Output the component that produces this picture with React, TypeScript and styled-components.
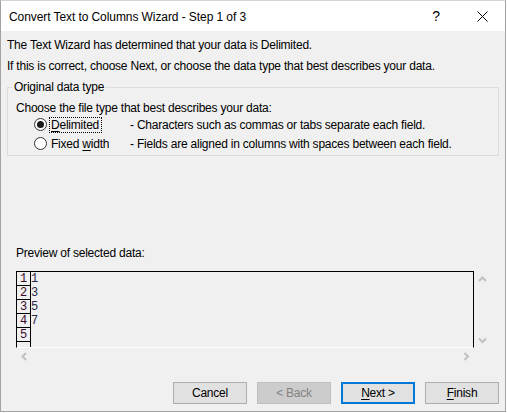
import React from "react";
import styled, { createGlobalStyle } from "styled-components";

const GlobalStyle = createGlobalStyle`
  html, body {
    margin: 0;
    padding: 0;
    background: #ffffff;
  }
  body {
    font-family: "Segoe UI", "Liberation Sans", Arial, sans-serif;
    font-size: 12px;
    letter-spacing: -0.22px;
    color: #000000;
  }
`;

const Frame = styled.div`
  box-sizing: border-box;
  width: 506px;
  height: 412px;
  border: 1px solid #a3a3a3;
  border-top-color: #d4d4d4;
  background: #f0f0f0;
  display: flex;
  flex-direction: column;
`;

const TitleBar = styled.div`
  height: 30px;
  flex: none;
  background: #ffffff;
  display: flex;
  align-items: center;
`;

const Title = styled.div`
  flex: 1;
  padding: 2px 0 0 8px;
  font-size: 12px;
  letter-spacing: -0.08px;
  white-space: nowrap;
`;

const CaptionButton = styled.div`
  width: 46px;
  height: 30px;
  display: flex;
  align-items: center;
  justify-content: center;
  font-size: 14px;
`;

const Body = styled.div`
  flex: 1;
  display: flex;
  flex-direction: column;
  padding: 0 6px 0 6px;
`;

const Line = styled.div<{ $top: number; $indent?: number; $height?: number }>`
  line-height: 16px;
  height: ${(p) => p.$height ?? 16}px;
  margin-top: ${(p) => p.$top}px;
  padding-left: ${(p) => p.$indent ?? 0}px;
  white-space: nowrap;
`;

const GroupBox = styled.fieldset`
  margin: 5px 0 0 0;
  padding: 0 0 2px 0;
  border: 1px solid #dcdcdc;
  min-width: 0;
`;

const Legend = styled.legend`
  margin-left: 4px;
  padding: 0 2px;
  line-height: 16px;
`;

const RadioRow = styled.div`
  height: 19px;
  display: flex;
  align-items: center;
  padding-left: 26px;
  white-space: nowrap;
`;

const RadioDot = styled.span<{ $checked?: boolean }>`
  box-sizing: border-box;
  width: 13px;
  height: 13px;
  border-radius: 50%;
  border: 1px solid #333333;
  background: #ffffff;
  display: flex;
  align-items: center;
  justify-content: center;
  flex: none;

  &::after {
    content: "";
    width: 7px;
    height: 7px;
    border-radius: 50%;
    background: #1a1a1a;
    display: ${(p) => (p.$checked ? "block" : "none")};
  }
`;

const RadioLabel = styled.span`
  width: 80px;
  margin-left: 3px;
  flex: none;
  display: flex;
`;

const FocusText = styled.span<{ $focused?: boolean }>`
  padding: 0 2px 0 1px;
  line-height: 14px;
  outline: ${(p) => (p.$focused ? "1px dotted #000000" : "none")};
`;

const Key = styled.span`
  text-decoration: underline;
  text-underline-offset: 2px;
`;

const PreviewArea = styled.div`
  margin: 10px 0 0 9px;
  display: grid;
  grid-template-columns: 458px 17px;
  grid-template-rows: 77px 17px;
`;

const PreviewBox = styled.div`
  box-sizing: border-box;
  border: 1px solid #000000;
  border-bottom-color: #ffffff;
  overflow: hidden;
  font-family: "Liberation Mono", "DejaVu Sans Mono", monospace;
  font-size: 12px;
  letter-spacing: 0;
`;

const PreviewRow = styled.div`
  height: 14px;
  display: flex;
  align-items: stretch;
`;

const RowNumber = styled.div`
  box-sizing: border-box;
  width: 14px;
  height: 14px;
  border-right: 1px solid #000000;
  border-bottom: 1px solid #000000;
  line-height: 14px;
  text-align: center;
  color: #3a0a2a;
  flex: none;
`;

const Cell = styled.div`
  line-height: 14px;
  color: #2a2a4a;
`;

const VScroll = styled.div`
  display: flex;
  flex-direction: column;
  justify-content: space-between;
  align-items: center;
  padding: 5px 0 4px 0;
`;

const HScroll = styled.div`
  display: flex;
  justify-content: space-between;
  align-items: center;
  padding: 0 4px 0 5px;
`;

const ButtonRow = styled.div`
  margin-top: 17px;
  display: flex;
  justify-content: flex-end;
  gap: 10px;
`;

const Button = styled.div<{ $primary?: boolean; $disabled?: boolean }>`
  box-sizing: border-box;
  width: 74px;
  height: 22px;
  display: flex;
  align-items: center;
  justify-content: center;
  background: ${(p) => (p.$disabled ? "#cccccc" : "#e1e1e1")};
  border: ${(p) =>
    p.$primary
      ? "2px solid #0078d7"
      : p.$disabled
        ? "1px solid #bfbfbf"
        : "1px solid #adadad"};
  color: ${(p) => (p.$disabled ? "#838383" : "#000000")};
`;

const Chevron: React.FC<{ dir: "up" | "down" | "left" | "right" }> = ({ dir }) => {
  const points = {
    up: "1,5 4.5,1.5 8,5",
    down: "1,1.5 4.5,5 8,1.5",
    left: "5,1 1.5,4.5 5,8",
    right: "1.5,1 5,4.5 1.5,8",
  }[dir];
  const vertical = dir === "up" || dir === "down";
  return (
    <svg width={vertical ? 9 : 7} height={vertical ? 7 : 9}>
      <polyline points={points} fill="none" stroke="#c0c0c0" strokeWidth="2" />
    </svg>
  );
};

const CloseIcon = () => (
  <svg width="11" height="11" viewBox="0 0 11 11">
    <path d="M0.5 0.5 L10.5 10.5 M10.5 0.5 L0.5 10.5" stroke="#000" strokeWidth="1" />
  </svg>
);

const rows = [
  { n: "1", v: "1" },
  { n: "2", v: "3" },
  { n: "3", v: "5" },
  { n: "4", v: "7" },
  { n: "5", v: "" },
  { n: "", v: "" },
];

export default function App() {
  return (
    <>
      <GlobalStyle />
      <Frame>
        <TitleBar>
          <Title>Convert Text to Columns Wizard - Step 1 of 3</Title>
          <CaptionButton>?</CaptionButton>
          <CaptionButton>
            <CloseIcon />
          </CaptionButton>
        </TitleBar>
        <Body>
          <Line $top={6}>The Text Wizard has determined that your data is Delimited.</Line>
          <Line $top={5}>
            If this is correct, choose Next, or choose the data type that best describes your data.
          </Line>
          <GroupBox>
            <Legend>Original data type</Legend>
            <Line $top={5} $indent={8} $height={15}>
              Choose the file type that best describes your data:
            </Line>
            <RadioRow>
              <RadioDot $checked />
              <RadioLabel>
                <FocusText $focused>
                  <Key>D</Key>elimited
                </FocusText>
              </RadioLabel>
              <span>- Characters such as commas or tabs separate each field.</span>
            </RadioRow>
            <RadioRow>
              <RadioDot />
              <RadioLabel>
                <FocusText>
                  Fixed <Key>w</Key>idth
                </FocusText>
              </RadioLabel>
              <span>- Fields are aligned in columns with spaces between each field.</span>
            </RadioRow>
          </GroupBox>
          <Line $top={89} $indent={9}>
            Preview of selected data:
          </Line>
          <PreviewArea>
            <PreviewBox>
              {rows.map((r, i) => (
                <PreviewRow key={i}>
                  <RowNumber>{r.n}</RowNumber>
                  <Cell>{r.v}</Cell>
                </PreviewRow>
              ))}
            </PreviewBox>
            <VScroll>
              <Chevron dir="up" />
              <Chevron dir="down" />
            </VScroll>
            <HScroll>
              <Chevron dir="left" />
              <Chevron dir="right" />
            </HScroll>
          </PreviewArea>
          <ButtonRow>
            <Button>Cancel</Button>
            <Button $disabled>&lt; Back</Button>
            <Button $primary>
              <span>
                <Key>N</Key>ext &gt;
              </span>
            </Button>
            <Button>
              <span>
                <Key>F</Key>inish
              </span>
            </Button>
          </ButtonRow>
        </Body>
      </Frame>
    </>
  );
}
